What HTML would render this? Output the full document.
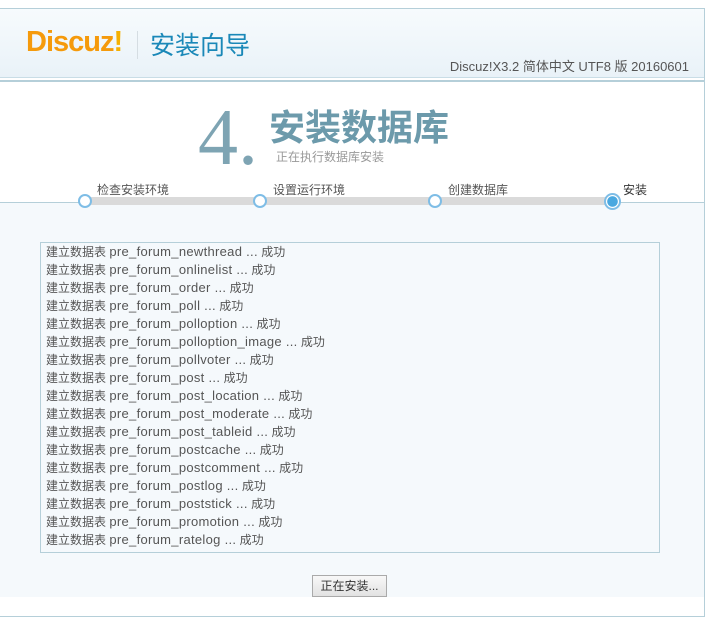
<!DOCTYPE html>
<html><head><meta charset="utf-8"><style>
*{margin:0;padding:0;box-sizing:border-box}
body{width:709px;height:636px;background:#fff;font-family:"Liberation Sans","Noto Sans CJK SC",sans-serif;position:relative;overflow:hidden}
.wrap{position:absolute;left:0;top:8px;width:705px;height:609px;border:1px solid #b5cfd9;border-left:none}
.hd{position:absolute;left:0;top:0;width:704px;height:69px;background:linear-gradient(#f7fbfd,#e9f2f8);border-bottom:1px solid #c9dde6}
.hd2{position:absolute;left:0;top:71px;width:704px;height:2px;background:#b5cfd9}
.logo{position:absolute;left:26px;top:17px;font-size:29px;font-weight:bold;color:#f59a0b;letter-spacing:-1px}
.sep{position:absolute;left:137px;top:22px;width:1px;height:28px;background:#d5dde2}
.wz{position:absolute;left:150px;top:17px;font-size:25px;color:#1a88b8}
.ver{position:absolute;right:15px;top:47px;font-size:13px;color:#555}
.lower{position:absolute;left:0;top:193px;width:704px;height:395px;background:#f5f9fc;border-top:1px solid #b5cfd9}
.four{position:absolute;left:198px;top:84px;font-family:"Liberation Serif",serif;font-size:80px;color:#7ea4b3}
.title{position:absolute;left:269px;top:90px;font-size:36px;font-weight:bold;color:#6c9aab}
.sub{position:absolute;left:276px;top:139px;font-size:12px;color:#999}
.bar{position:absolute;left:86px;top:188px;width:526px;height:8px;background:#dadada}
.c{position:absolute;width:14px;height:14px;border:2px solid #7ebde6;border-radius:50%;background:#fff;top:185px}
.lab{position:absolute;top:172px;font-size:12px;color:#555}
.log{position:absolute;left:40px;top:233px;width:620px;height:311px;border:1px solid #b5cfd9;background:#f5f9fc;padding:0 5px;font-size:12px;line-height:18px;color:#555}
.log span{font-size:13px;letter-spacing:0.3px}
.btn{position:absolute;left:312px;top:566px;width:75px;height:22px;border:1px solid #aaa;background:linear-gradient(#f8f8f8,#e2e2e2);font-size:12px;color:#333;text-align:center;line-height:20px}
</style></head><body>
<div class="wrap">
<div class="hd"></div><div class="hd2"></div>
<div class="logo">Discuz<span style="color:#f5b000">!</span></div>
<div class="sep"></div>
<div class="wz">安装向导</div>
<div class="ver">Discuz!X3.2 简体中文 UTF8 版 20160601</div>
<div class="lower"></div>
<div class="four">4.</div>
<div class="title">安装数据库</div>
<div class="sub">正在执行数据库安装</div>
<div class="bar"></div>
<div class="c" style="left:78px"></div>
<div class="c" style="left:253px"></div>
<div class="c" style="left:428px"></div>
<div class="c" style="left:604px;width:17px;height:17px;top:184px;border-color:#7ebde6;background:radial-gradient(#4aa8e0 55%,#fff 60%)"></div>
<div class="lab" style="left:97px">检查安装环境</div>
<div class="lab" style="left:273px">设置运行环境</div>
<div class="lab" style="left:448px">创建数据库</div>
<div class="lab" style="left:623px;color:#333">安装</div>
<div class="log">
建立数据表 <span>pre_forum_newthread ...</span> 成功<br>
建立数据表 <span>pre_forum_onlinelist ...</span> 成功<br>
建立数据表 <span>pre_forum_order ...</span> 成功<br>
建立数据表 <span>pre_forum_poll ...</span> 成功<br>
建立数据表 <span>pre_forum_polloption ...</span> 成功<br>
建立数据表 <span>pre_forum_polloption_image ...</span> 成功<br>
建立数据表 <span>pre_forum_pollvoter ...</span> 成功<br>
建立数据表 <span>pre_forum_post ...</span> 成功<br>
建立数据表 <span>pre_forum_post_location ...</span> 成功<br>
建立数据表 <span>pre_forum_post_moderate ...</span> 成功<br>
建立数据表 <span>pre_forum_post_tableid ...</span> 成功<br>
建立数据表 <span>pre_forum_postcache ...</span> 成功<br>
建立数据表 <span>pre_forum_postcomment ...</span> 成功<br>
建立数据表 <span>pre_forum_postlog ...</span> 成功<br>
建立数据表 <span>pre_forum_poststick ...</span> 成功<br>
建立数据表 <span>pre_forum_promotion ...</span> 成功<br>
建立数据表 <span>pre_forum_ratelog ...</span> 成功
</div>
<div class="btn">正在安装...</div>
</div>
</body></html>
